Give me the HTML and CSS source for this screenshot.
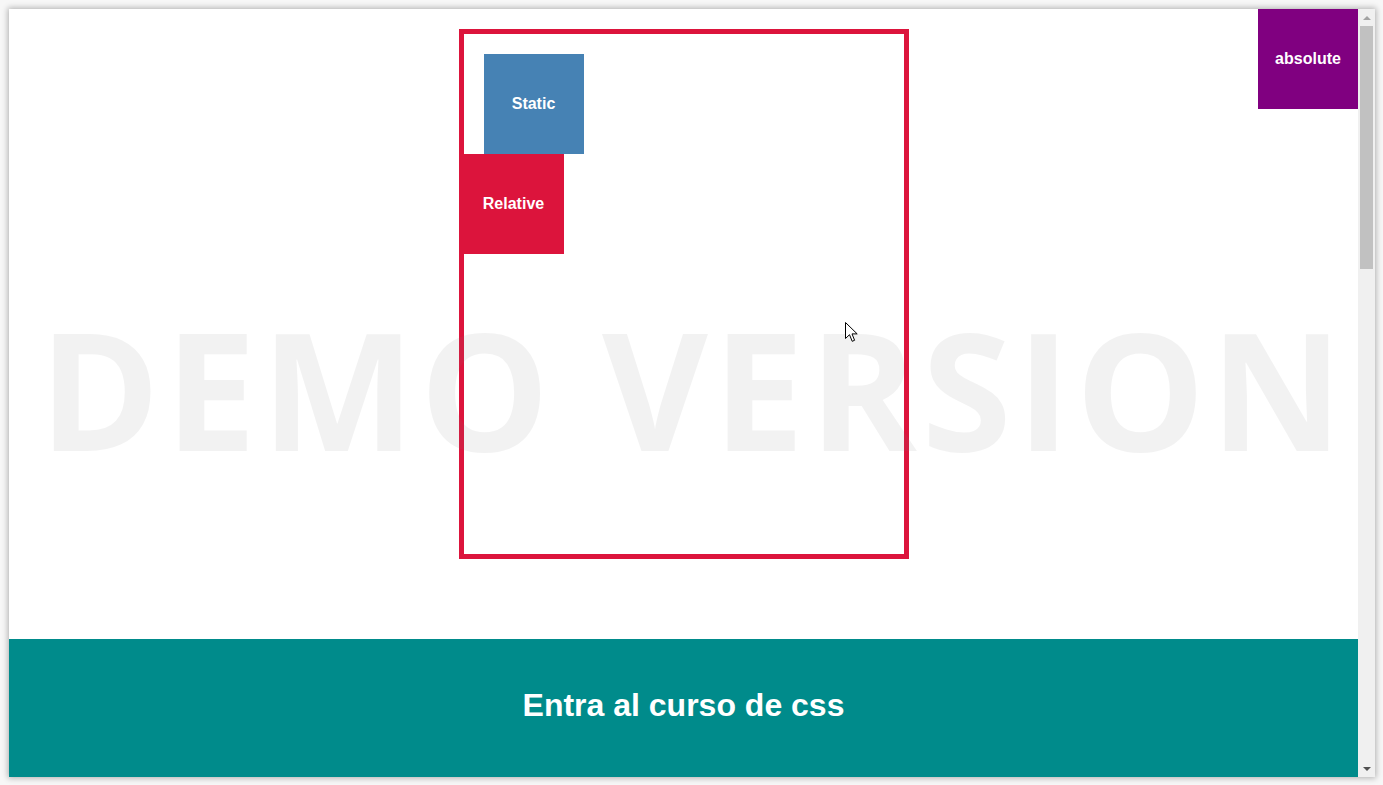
FILE: index.html
```html
<!DOCTYPE html>
<html lang="es">
<head>
<meta charset="utf-8">
<title>Position</title>
<link rel="stylesheet" href="styles.css">
</head>
<body>
<div class="window">
  <div class="page">
    <div class="container">
      <div class="box static">Static</div>
      <div class="box relative">Relative</div>
    </div>
    <div class="box absolute">absolute</div>
    <footer class="footer">
      <h2 class="footer-title">Entra al curso de css</h2>
    </footer>
    <div class="watermark">DEMO VERSION</div>
    <svg class="cursor" width="13" height="21" viewBox="0 0 13 21">
      <path d="M0.5 0.5 L0.5 16.5 L4.5 12.7 L7.2 19.3 L9.6 18.3 L7 11.9 L12.2 11.9 Z" fill="#fff" stroke="#000" stroke-width="1" stroke-linejoin="miter"/>
    </svg>
  </div>
  <div class="scrollbar">
    <div class="arrow arrow-up"></div>
    <div class="track"><div class="thumb"></div></div>
    <div class="arrow arrow-down"></div>
  </div>
</div>
</body>
</html>
```
FILE: styles.css
```css
html, body {
  margin: 0;
  padding: 0;
  background: #f7f7f7;
  height: 785px;
  overflow: hidden;
}
.window {
  display: flex;
  width: 1366px;
  height: 768px;
  margin: 9px 8px 8px 9px;
  background: #fff;
  box-shadow: 0 0 6px 1px rgba(0, 0, 0, 0.3);
}
.page {
  position: relative;
  flex: 1;
  overflow: hidden;
  font-family: "Liberation Sans", Arial, sans-serif;
}
.container {
  width: 400px;
  height: 480px;
  padding: 20px;
  border: 5px solid #dc143c;
  margin: 20px auto 0;
}
.box {
  width: 100px;
  height: 100px;
  display: flex;
  align-items: center;
  justify-content: center;
  color: #fff;
  font-weight: bold;
  font-size: 16px;
}
.static {
  background: #4682b4;
}
.relative {
  position: relative;
  left: -20px;
  background: #dc143c;
}
.absolute {
  position: absolute;
  top: 0;
  right: 0;
  background: #800080;
}
.footer {
  margin-top: 80px;
  height: 400px;
  background: #008b8b;
  padding-top: 48px;
  box-sizing: border-box;
}
.footer-title {
  margin: 0;
  text-align: center;
  color: #fff;
  font-size: 32px;
  line-height: 36px;
  font-weight: bold;
}
.watermark {
  position: absolute;
  left: 20px;
  right: 0;
  top: 259px;
  text-align: center;
  white-space: nowrap;
  font-family: "Open Sans", sans-serif;
  font-weight: 700;
  font-size: 163px;
  line-height: 240px;
  letter-spacing: 5px;
  color: rgba(128, 128, 128, 0.1);
  pointer-events: none;
}
.cursor {
  position: absolute;
  left: 836px;
  top: 313px;
}
.scrollbar {
  width: 17px;
  background: #f0f0f0;
  display: flex;
  flex-direction: column;
}
.arrow {
  height: 17px;
  display: flex;
  align-items: center;
  justify-content: center;
}
.arrow-up::before {
  content: "";
  border-left: 4px solid transparent;
  border-right: 4px solid transparent;
  border-bottom: 4px solid #a3a3a3;
}
.arrow-down::before {
  content: "";
  border-left: 4px solid transparent;
  border-right: 4px solid transparent;
  border-top: 4px solid #505050;
}
.track {
  flex: 1;
  padding: 0 2px;
}
.thumb {
  height: 243px;
  background: #c1c1c1;
}
```
